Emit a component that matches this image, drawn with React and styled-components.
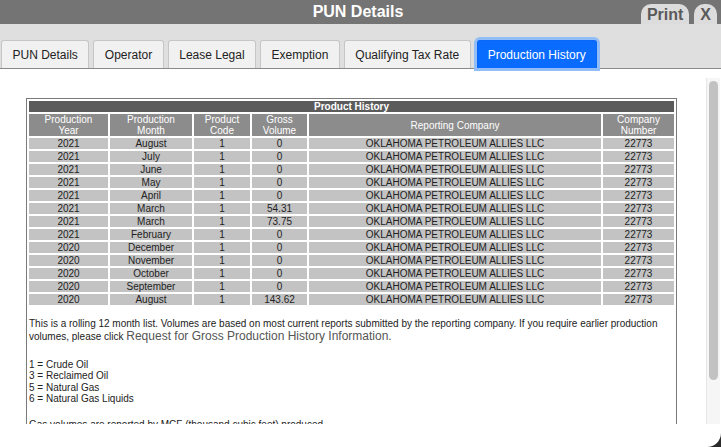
import React from "react";
import styled, { createGlobalStyle } from "styled-components";

const GlobalStyle = createGlobalStyle`
  html, body {
    margin: 0;
    padding: 0;
    background: #2b2b2b;
  }
  body {
    font-family: "Liberation Sans", Arial, Helvetica, sans-serif;
  }
`;

const tabs = [
  "PUN Details",
  "Operator",
  "Lease Legal",
  "Exemption",
  "Qualifying Tax Rate",
  "Production History",
];

const rows = [
  ["2021", "August", "1", "0"],
  ["2021", "July", "1", "0"],
  ["2021", "June", "1", "0"],
  ["2021", "May", "1", "0"],
  ["2021", "April", "1", "0"],
  ["2021", "March", "1", "54.31"],
  ["2021", "March", "1", "73.75"],
  ["2021", "February", "1", "0"],
  ["2020", "December", "1", "0"],
  ["2020", "November", "1", "0"],
  ["2020", "October", "1", "0"],
  ["2020", "September", "1", "0"],
  ["2020", "August", "1", "143.62"],
];

const codes = [
  "1 = Crude Oil",
  "3 = Reclaimed Oil",
  "5 = Natural Gas",
  "6 = Natural Gas Liquids",
];

function App() {
  return (
    <Modal>
      <GlobalStyle />
      <TitleBar>
        <span />
        <Title>PUN Details</Title>
        <TitleButtons>
          <TitleButton>Print</TitleButton>
          <TitleButton>X</TitleButton>
        </TitleButtons>
      </TitleBar>
      <TabBar>
        {tabs.map((t) => (
          <Tab key={t} active={t === "Production History"}>
            {t}
          </Tab>
        ))}
      </TabBar>
      <Content>
        <ScrollArea>
          <Viewport>
            <Box>
              <HistoryTable>
                <colgroup>
                  <col style={{ width: 79 }} />
                  <col style={{ width: 82 }} />
                  <col style={{ width: 56 }} />
                  <col style={{ width: 55 }} />
                  <col style={{ width: 292 }} />
                  <col style={{ width: 71 }} />
                </colgroup>
                <thead>
                  <tr>
                    <Caption colSpan={6}>Product History</Caption>
                  </tr>
                  <tr>
                    <HeadCell>
                      Production
                      <br />
                      Year
                    </HeadCell>
                    <HeadCell>
                      Production
                      <br />
                      Month
                    </HeadCell>
                    <HeadCell>
                      Product
                      <br />
                      Code
                    </HeadCell>
                    <HeadCell>
                      Gross
                      <br />
                      Volume
                    </HeadCell>
                    <HeadCell>Reporting Company</HeadCell>
                    <HeadCell>
                      Company
                      <br />
                      Number
                    </HeadCell>
                  </tr>
                </thead>
                <tbody>
                  {rows.map((r, i) => (
                    <tr key={i}>
                      <Cell>{r[0]}</Cell>
                      <Cell>{r[1]}</Cell>
                      <Cell>{r[2]}</Cell>
                      <Cell>{r[3]}</Cell>
                      <Cell>OKLAHOMA PETROLEUM ALLIES LLC</Cell>
                      <Cell>22773</Cell>
                    </tr>
                  ))}
                </tbody>
              </HistoryTable>
              <Note>
                This is a rolling 12 month list. Volumes are based on most
                current reports submitted by the reporting company. If you
                require earlier production volumes, please click{" "}
                <RequestLink>
                  Request for Gross Production History Information.
                </RequestLink>
              </Note>
              <CodeList>
                {codes.map((c) => (
                  <div key={c}>{c}</div>
                ))}
              </CodeList>
              <Note spaced>
                Gas volumes are reported by MCF (thousand cubic feet) produced.
              </Note>
            </Box>
          </Viewport>
          <Track>
            <Thumb />
          </Track>
        </ScrollArea>
      </Content>
    </Modal>
  );
}

const Modal = styled.div`
  width: 721px;
  height: 447px;
  background: #fff;
  display: flex;
  flex-direction: column;
  overflow: hidden;
  border-bottom-right-radius: 14px;
`;

const TitleBar = styled.div`
  height: 24px;
  flex: none;
  background: #747474;
  display: grid;
  grid-template-columns: 1fr auto 1fr;
  align-items: end;
`;

const Title = styled.div`
  color: #fff;
  font-weight: bold;
  font-size: 16px;
  line-height: 24px;
  align-self: center;
  padding-right: 5px;
`;

const TitleButtons = styled.div`
  display: flex;
  justify-content: flex-end;
  gap: 5px;
  padding-right: 4px;
`;

const TitleButton = styled.button`
  height: 20px;
  border: none;
  background: #dcdcdc;
  color: #5a5a5a;
  font-family: inherit;
  font-weight: bold;
  font-size: 16px;
  line-height: 20px;
  padding: 1px 6px 0;
  border-radius: 10px 10px 0 0;
`;

const TabBar = styled.div`
  flex: none;
  height: 28px;
  padding: 16px 0 0 1px;
  background: #dfdfdf;
  border-bottom: 1px solid #8a8a8a;
  display: flex;
  align-items: flex-end;
  gap: 4px;
`;

const Tab = styled.div`
  height: 28px;
  box-sizing: border-box;
  display: flex;
  align-items: center;
  padding: 0 ${(p) => (p.active ? "10px" : "10.5px")};
  margin-left: ${(p) => (p.active ? "2px" : "0")};
  font-size: 12px;
  border-radius: 3px 3px 0 0;
  border: 1px solid ${(p) => (p.active ? "#0a66f5" : "#c6c6c6")};
  border-bottom: none;
  background: ${(p) => (p.active ? "#0a6cff" : "#f1f1f1")};
  color: ${(p) => (p.active ? "#fff" : "#222")};
  box-shadow: ${(p) => (p.active ? "0 0 0 3px #93bdf6" : "none")};
  position: relative;
  z-index: ${(p) => (p.active ? 1 : 0)};
`;

const Content = styled.div`
  flex: 1;
  padding-top: 9px;
  padding-bottom: 23px;
  display: flex;
  min-height: 0;
`;

const ScrollArea = styled.div`
  flex: 1;
  display: flex;
  min-height: 0;
`;

const Viewport = styled.div`
  flex: 1;
  overflow: hidden;
  padding: 20px 0 0 26px;
`;

const Box = styled.div`
  width: 651px;
  box-sizing: border-box;
  border: 1px solid #7a7a7a;
  padding-bottom: 40px;
`;

const HistoryTable = styled.table`
  width: 649px;
  table-layout: fixed;
  border-collapse: separate;
  border-spacing: 2px;
  font-size: 10px;
`;

const Caption = styled.th`
  height: 11px;
  padding: 0;
  line-height: 11px;
  background: #5b5b5b;
  color: #fff;
  font-weight: bold;
  text-align: center;
`;

const HeadCell = styled.th`
  height: 22px;
  padding: 0;
  line-height: 11px;
  background: #8c8c8c;
  color: #fff;
  font-weight: normal;
  text-align: center;
`;

const Cell = styled.td`
  height: 11px;
  padding: 0;
  line-height: 11px;
  background: #c3c3c3;
  color: #222;
  text-align: center;
  white-space: nowrap;
`;

const Note = styled.div`
  margin-top: ${(p) => (p.spaced ? "15px" : "11px")};
  padding: 0 2px;
  font-size: 10px;
  line-height: 12px;
  color: #222;
`;

const RequestLink = styled.a`
  font-size: 12px;
  line-height: 12px;
  color: #555;
  text-decoration: none;
`;

const CodeList = styled.div`
  margin-top: 16px;
  padding: 0 2px;
  font-size: 10px;
  line-height: 11.3px;
  color: #222;
`;

const Track = styled.div`
  width: 14px;
  flex: none;
  margin-right: 1px;
  box-sizing: border-box;
  background: #f6f6f6;
  border-left: 1px solid #e6e6e6;
  padding: 3px 2px 0 2px;
`;

const Thumb = styled.div`
  height: 299px;
  border-radius: 5px;
  background: #c2c2c2;
`;

export default App;
